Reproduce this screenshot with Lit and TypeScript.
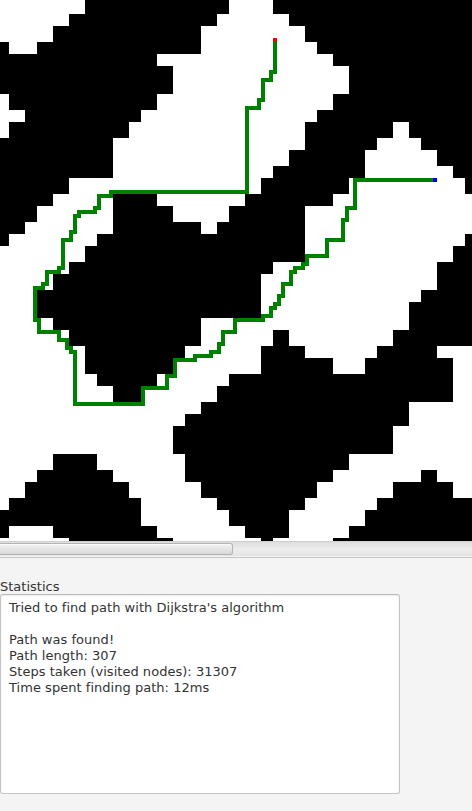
import { LitElement, html, css, svg } from "lit";
import { customElement } from "lit/decorators.js";

// Wall bands: [top, bottom, x0, x1, x0, x1, ...]
const WALLS: number[][] = [
  [0, 14, 85, 229, 273, 472],
  [14, 26, 69, 217, 289, 472],
  [26, 42, 53, 201, 305, 472],
  [42, 54, 0, 9, 37, 201, 317, 472],
  [54, 66, 0, 157, 333, 472],
  [66, 94, 0, 173, 349, 472],
  [94, 110, 9, 157, 333, 472],
  [110, 122, 25, 141, 317, 472],
  [122, 138, 9, 129, 305, 393, 409, 472],
  [138, 150, 0, 113, 305, 377, 421, 472],
  [150, 166, 0, 113, 289, 365, 437, 472],
  [166, 178, 0, 113, 273, 365, 453, 472],
  [178, 194, 0, 69, 261, 349, 465, 472],
  [194, 206, 0, 53, 113, 157, 245, 333],
  [206, 222, 0, 37, 113, 173, 229, 305],
  [222, 234, 0, 25, 113, 201, 217, 305],
  [234, 246, 0, 9, 97, 305, 465, 472],
  [246, 262, 85, 305, 453, 472],
  [262, 274, 69, 273, 437, 472],
  [274, 290, 53, 261, 437, 472],
  [290, 302, 37, 261, 421, 472],
  [302, 318, 37, 261, 409, 472],
  [318, 330, 53, 201, 409, 472],
  [330, 346, 69, 201, 273, 289, 393, 472],
  [346, 358, 85, 185, 261, 305, 377, 437],
  [358, 374, 85, 173, 261, 333, 365, 453],
  [374, 386, 97, 157, 229, 453],
  [386, 402, 113, 141, 217, 453],
  [402, 414, 201, 409],
  [414, 426, 185, 409],
  [426, 454, 173, 393],
  [454, 470, 53, 97, 185, 349],
  [470, 482, 37, 113, 185, 333, 421, 437],
  [482, 498, 25, 129, 201, 317, 393, 453],
  [498, 510, 9, 141, 217, 305, 377, 472],
  [510, 526, 0, 141, 229, 289, 365, 472],
  [526, 538, 0, 9, 53, 157, 245, 289, 349, 472],
  [538, 541, 69, 173, 261, 273, 333, 472],
];

// Corner cells of the found route (top-left of each 4px cell)
const ROUTE =
  "M273 38V70H269V78H261V98H257V106H245V190H109V194H97V206H93V210H77V214H73V230H69V238H61V266H57V270H45V282H41V286H33V318H37V330H57V338H65V346H69V350H73V402H141V386H165V374H173V358H193V354H209V350H217V342H221V330H233V318H261V314H269V306H273V302H277V294H281V282H289V270H293V266H301V262H305V254H325V238H341V218H345V206H353V178H433";

const LINES = [
  "Tried to find path with Dijkstra's algorithm",
  "",
  "Path was found!",
  "Path length: 307",
  "Steps taken (visited nodes): 31307",
  "Time spent finding path: 12ms",
];

@customElement("map-view")
export class MapView extends LitElement {
  static styles = css`
    :host { display: block; height: 541px; background: #fff; }
    .map { display: block; shape-rendering: crispEdges; }
    .route { fill: none; stroke: #008000; stroke-width: 4; stroke-linecap: square; stroke-linejoin: miter; }
    .start { fill: #f00; }
    .goal { fill: #00f; }
  `;
  render() {
    const d = WALLS.map(([t, b, ...xs]) => {
      let s = "";
      for (let i = 0; i < xs.length; i += 2) s += `M${xs[i]} ${t}H${xs[i + 1]}V${b}H${xs[i]}Z`;
      return s;
    }).join("");
    return html`<svg class="map" width="472" height="541" viewBox="0 0 472 541">
      ${svg`<path d=${d}></path>
      <path class="route" transform="translate(2 2)" d=${ROUTE}></path>
      <rect class="start" x="273" y="38" width="4" height="4"></rect>
      <rect class="goal" x="433" y="178" width="4" height="4"></rect>`}
    </svg>`;
  }
}

@customElement("app-root")
export class AppRoot extends LitElement {
  static styles = css`
    :host {
      display: flex; flex-direction: column; width: 472px; height: 811px; overflow: hidden;
      background: #f4f4f4; color: #333; font: 13px/16px "DejaVu Sans", sans-serif;
    }
    .scrollbar {
      box-sizing: border-box; height: 17px; flex: none; padding: 1px 0 2px;
      border-top: 1px solid #cfcfcf; border-bottom: 1px solid #c3c3c3;
      background: linear-gradient(#dedede, #ededed 50%, #e3e3e3 14px, #f4f4f4 14px);
    }
    .thumb {
      box-sizing: border-box; width: 233px; height: 12px; border: 1px solid #b3b3b3; border-left: 0;
      border-radius: 0 3px 3px 0; background: linear-gradient(#f2f2f2, #d9d9d9);
      box-shadow: inset 0 1px #fafafa;
    }
    .stats { padding-top: 21px; }
    .label { height: 15px; }
    .area {
      box-sizing: border-box; width: 400px; height: 200px; padding: 5px 8px;
      border: 1px solid #c4c4c4; border-top-color: #b8b8b8; border-radius: 3px; background: #fff;
      box-shadow: inset 0 1px 2px #ececec; letter-spacing: 0.03px;
    }
    .line { height: 16px; white-space: pre; }
  `;
  render() {
    return html`<map-view></map-view>
      <div class="scrollbar"><div class="thumb"></div></div>
      <section class="stats">
        <div class="label">Statistics</div>
        <div class="area">${LINES.map((l) => html`<div class="line">${l}</div>`)}</div>
      </section>`;
  }
}
